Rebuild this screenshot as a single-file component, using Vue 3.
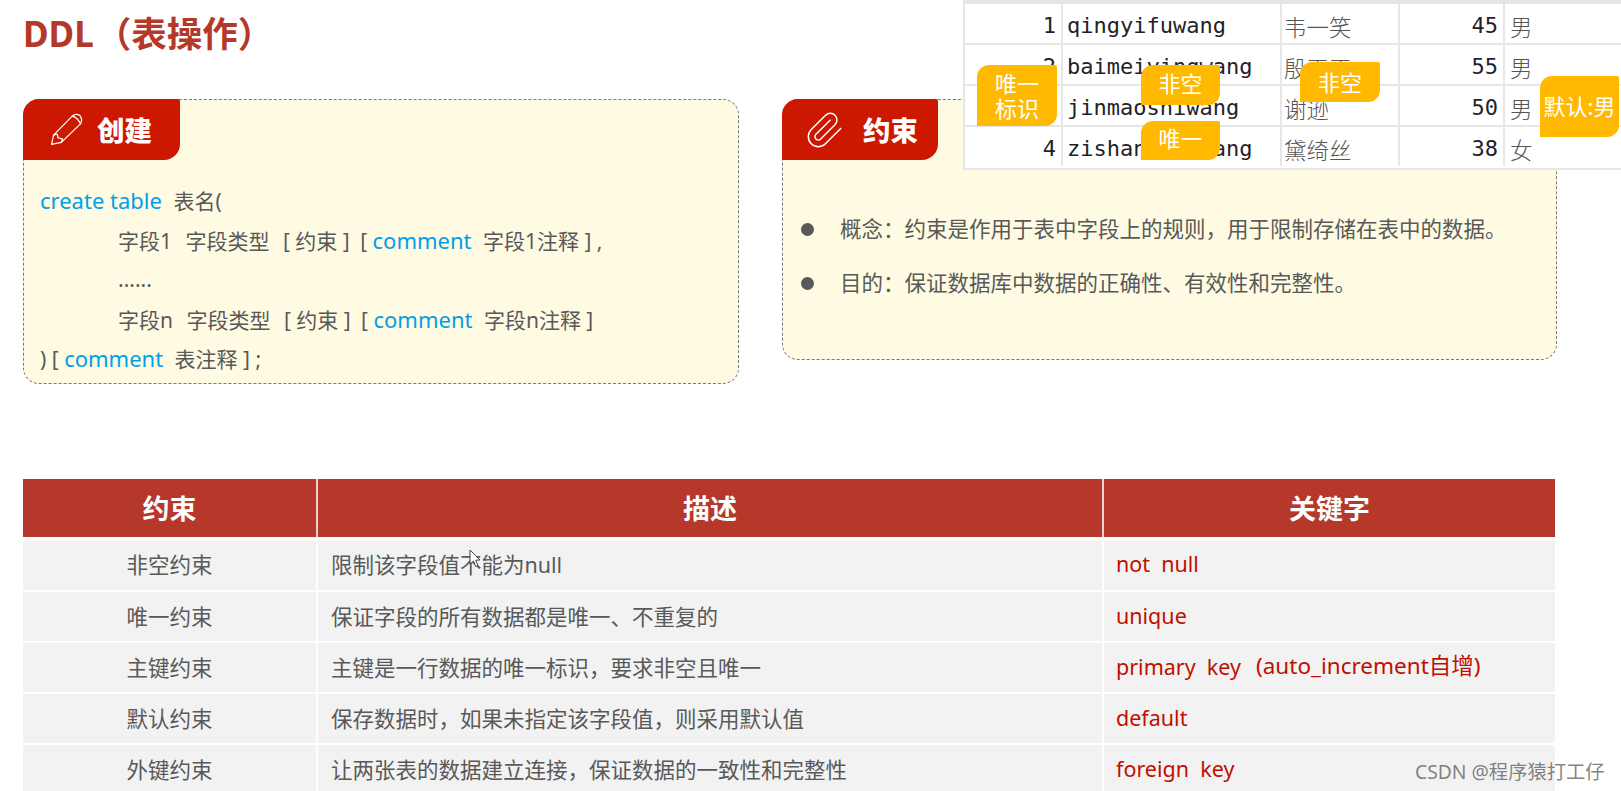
<script setup>
const overlayRows = [
  { id: '1', name: 'qingyifuwang', cn: '韦一笑', age: '45', sex: '男' },
  { id: '2', name: 'baimeiyingwang', cn: '殷天正', age: '55', sex: '男' },
  { id: '3', name: 'jinmaoshiwang', cn: '谢逊', age: '50', sex: '男' },
  { id: '4', name: 'zishanlongwang', cn: '黛绮丝', age: '38', sex: '女' },
]
const rules = [
  { name: '非空约束', desc: '限制该字段值不能为null', key: 'not  null' },
  { name: '唯一约束', desc: '保证字段的所有数据都是唯一、不重复的', key: 'unique' },
  { name: '主键约束', desc: '主键是一行数据的唯一标识，要求非空且唯一', key: 'primary  key', extra: '(auto_increment自增)' },
  { name: '默认约束', desc: '保存数据时，如果未指定该字段值，则采用默认值', key: 'default' },
  { name: '外键约束', desc: '让两张表的数据建立连接，保证数据的一致性和完整性', key: 'foreign  key' },
]
</script>

<template>
  <div class="page">
    <h1 class="title">DDL<span class="title-cn">（表操作）</span></h1>

    <section class="cards">
      <article class="card card-create">
        <header class="tab tab-create">
          <svg class="pencil" viewBox="0 0 32 32" fill="none" stroke="#fff" stroke-width="1.2" stroke-linejoin="round" stroke-linecap="round">
            <path d="M1.5 30.5 L3.5 21.5 L21.5 3 Q25 0 29 2.5 Q32 6.5 29.5 10.5 L11 28.5 Z" />
            <path d="M3.5 21.5 L6.8 20.4 L8 24.2 L12 25 L11 28.5" />
            <path d="M21.5 3 Q27 4.5 29.5 10.5" />
          </svg>
          <span class="tab-label">创建</span>
        </header>
        <div class="code">
          <p><b>create table</b><i class="g7"></i> 表名(</p>
          <p class="in">字段1<i class="g8"></i> 字段类型<i class="g8"></i> [ 约束 ]<i class="g5"></i> [ <b>comment</b><i class="g7"></i> 字段1注释 ] ,</p>
          <p class="in dots">......</p>
          <p class="in">字段n<i class="g8"></i> 字段类型<i class="g8"></i> [ 约束 ]<i class="g5"></i> [ <b>comment</b><i class="g7"></i> 字段n注释 ]</p>
          <p>) [ <b>comment</b><i class="g7"></i> 表注释 ] ;</p>
        </div>
      </article>

      <article class="card card-rule">
        <header class="tab tab-rule">
          <svg class="clip" viewBox="0 0 24 24" fill="none" stroke="#fff" stroke-width="0.9" stroke-linecap="round" stroke-linejoin="round">
            <path d="m21.44 11.05-9.19 9.19a6 6 0 0 1-8.49-8.49l8.57-8.57A4 4 0 1 1 18 8.84l-8.59 8.57a2 2 0 0 1-2.83-2.83l8.49-8.48" />
          </svg>
          <span class="tab-label">约束</span>
        </header>
        <ul class="points">
          <li>概念：约束是作用于表中字段上的规则，用于限制存储在表中的数据。</li>
          <li>目的：保证数据库中数据的正确性、有效性和完整性。</li>
        </ul>
      </article>
    </section>

    <section class="rules">
      <div class="rules-head">
        <div>约束</div>
        <div>描述</div>
        <div>关键字</div>
      </div>
      <div v-for="r in rules" :key="r.name" class="rules-row">
        <div class="c-name">{{ r.name }}</div>
        <div class="c-desc">{{ r.desc }}</div>
        <div class="c-key">{{ r.key }}<span v-if="r.extra" class="extra">{{ r.extra }}</span></div>
      </div>
    </section>

    <!-- pasted picture of a data table, lying over the right card -->
    <div class="sample">
      <div v-for="row in overlayRows" :key="row.id" class="sample-row">
        <div class="s-id">{{ row.id }}</div>
        <div class="s-name">{{ row.name }}</div>
        <div class="s-cn">{{ row.cn }}</div>
        <div class="s-age">{{ row.age }}</div>
        <div class="s-sex">{{ row.sex }}</div>
      </div>
    </div>
    <div class="flag f-pk">唯一<br />标识</div>
    <div class="flag f-nn1">非空</div>
    <div class="flag f-uq">唯一</div>
    <div class="flag f-nn2">非空</div>
    <div class="flag f-def">默认:男</div>

    <svg class="cursor" viewBox="0 0 12 20" width="12" height="20">
      <path d="M1 1 L1 15 L4.4 12 L6.8 17.6 L9 16.6 L6.6 11.2 L11 11 Z" fill="#fff" stroke="#333" stroke-width="0.9" stroke-linejoin="round" />
    </svg>

    <div class="mark">CSDN @程序猿打工仔</div>
  </div>
</template>

<style>
html, body { margin: 0; overflow: hidden; background: #fff; }
</style>

<style scoped>
.page {
  position: relative;
  box-sizing: border-box;
  width: 1621px;
  height: 791px;
  overflow: hidden;
  background: #fff;
  padding-left: 23px;
  font-family: "Noto Sans", "Noto Sans CJK SC", sans-serif;
  color: #595959;
}
.title {
  margin: 0;
  height: 99px;
  line-height: 66px;
  font-size: 35px;
  font-weight: 700;
  color: #b5392a;
}
.title-cn {
  margin-left: 2px;
  font-size: 35.5px;
  text-spacing-trim: space-all;
}
.cards {
  display: flex;
  align-items: flex-start;
  gap: 43px;
  height: 284px;
}
.card {
  box-sizing: border-box;
  border: 1px dashed #7a7a7a;
  border-radius: 16px;
  background: #fefbe2;
}
.card-create { width: 716px; height: 285px; }
.card-rule { width: 775px; height: 261px; }
.tab {
  display: flex;
  align-items: center;
  box-sizing: border-box;
  height: 61px;
  margin: -1px 0 0 -1px;
  background: #cc1800;
  border-radius: 16px 2px 16px 0;
  color: #fff;
}
.tab-create { width: 157px; padding-left: 27px; gap: 14px; }
.tab-rule { width: 156px; padding-left: 23px; gap: 18px; }
.tab-label {
  font-size: 27.5px;
  font-weight: 900;
  font-family: "Noto Sans CJK SC", sans-serif;
  line-height: 1;
}
.pencil { width: 33px; height: 33px; flex: none; }
.clip { width: 40px; height: 40px; flex: none; }
.code {
  padding: 21px 0 0 16px;
  font-size: 21px;
  white-space: nowrap;
}
.code p {
  margin: 0;
  height: 39.5px;
  line-height: 39.5px;
}
.code b { font-weight: 400; font-size: 22px; color: #00a0e9; }
.code .in { padding-left: 78px; }
.g5, .g7, .g8 { display: inline-block; height: 1px; }
.g5 { width: 5px; }
.g7 { width: 6px; }
.g8 { width: 8px; }
.points {
  list-style: none;
  margin: 0;
  padding: 42px 0 0 57px;
  font-size: 21.5px;
}
.points li {
  position: relative;
  height: 54px;
  line-height: 54px;
}
.points li::before {
  content: "";
  position: absolute;
  left: -39px;
  top: 21px;
  width: 13px;
  height: 13px;
  border-radius: 50%;
  background: #595959;
}
.rules {
  width: 1532px;
  margin-top: 96px;
  font-size: 21.5px;
}
.rules-head,
.rules-row {
  display: grid;
  grid-template-columns: 293px 784px 451px;
  column-gap: 2px;
}
.rules-head {
  height: 58px;
  margin-bottom: 4px;
  background: #b5382a;
  color: #fff;
  font-size: 27px;
  font-weight: 700;
  font-family: "Noto Sans CJK SC", sans-serif;
}
.rules-head > div {
  display: flex;
  align-items: center;
  justify-content: center;
  box-sizing: border-box;
  padding-bottom: 2px;
  border-right: 2px solid #e8d3cf;
  margin-right: -2px;
}
.rules-head > div:last-child { border-right: 0; margin-right: 0; }
.rules-row {
  height: 49px;
  margin-bottom: 2px;
}
.rules-row > div {
  display: flex;
  align-items: center;
  box-sizing: border-box;
  padding-bottom: 3px;
  background: #f2f2f2;
}
.rules-head + .rules-row > div { padding-bottom: 5px; }
.c-name { justify-content: center; }
.c-desc { padding-left: 13px; }
.c-key {
  padding-left: 12px;
  color: #c00f00;
  white-space: pre;
}
.extra { margin-left: 15px; font-size: 22.5px; position: relative; top: -2px; }
.sample {
  position: absolute;
  left: 963px;
  top: 0;
  width: 658px;
  height: 170px;
  box-sizing: border-box;
  background: #fff;
  border-top: 4px solid #e6e6e6;
  border-left: 2px solid #e6e6e6;
  border-bottom: 2px solid #e6e6e6;
  font-family: "DejaVu Sans Mono", monospace;
  font-size: 22px;
  color: #1f2329;
}
.sample-row {
  display: grid;
  grid-template-columns: 98px 219px 118px 105px 116px;
  height: 41px;
  line-height: 44px;
  box-sizing: border-box;
  border-bottom: 2px solid #e6e6e6;
}
.sample-row:last-child { border-bottom: 0; }
.sample-row > div { border-right: 2px solid #e6e6e6; box-sizing: border-box; height: 39px; overflow: visible; }
.sample-row > div:last-child { border-right: 0; }
.s-id, .s-age { text-align: right; padding-right: 5px; }
.s-name { padding-left: 4px; }
.s-cn, .s-sex {
  padding-left: 2px;
  font-family: "Noto Sans CJK SC", sans-serif;
  font-weight: 300;
  color: #555;
  font-size: 22.5px;
}
.s-sex { padding-left: 5px; }
.flag {
  position: absolute;
  box-sizing: border-box;
  display: flex;
  align-items: center;
  justify-content: center;
  text-align: center;
  width: 79px;
  background: #ffb900;
  color: #fff;
  font-size: 22px;
  line-height: 25px;
  border-radius: 12px 2px 12px 0;
}
.f-pk { left: 977px; top: 65px; width: 80px; height: 61px; }
.f-nn1 { left: 1141px; top: 65px; height: 40px; padding-bottom: 4px; }
.f-uq { left: 1141px; top: 121px; height: 39px; padding-bottom: 4px; }
.f-nn2 { left: 1300px; top: 62px; width: 80px; height: 40px; }
.f-def { left: 1540px; top: 76px; height: 61px; white-space: nowrap; }
.cursor { position: absolute; left: 469px; top: 549px; }
.mark {
  position: absolute;
  left: 1415px;
  top: 757px;
  font-size: 19.3px;
  line-height: 30px;
  color: rgba(90, 90, 90, 0.75);
  white-space: nowrap;
}
</style>
